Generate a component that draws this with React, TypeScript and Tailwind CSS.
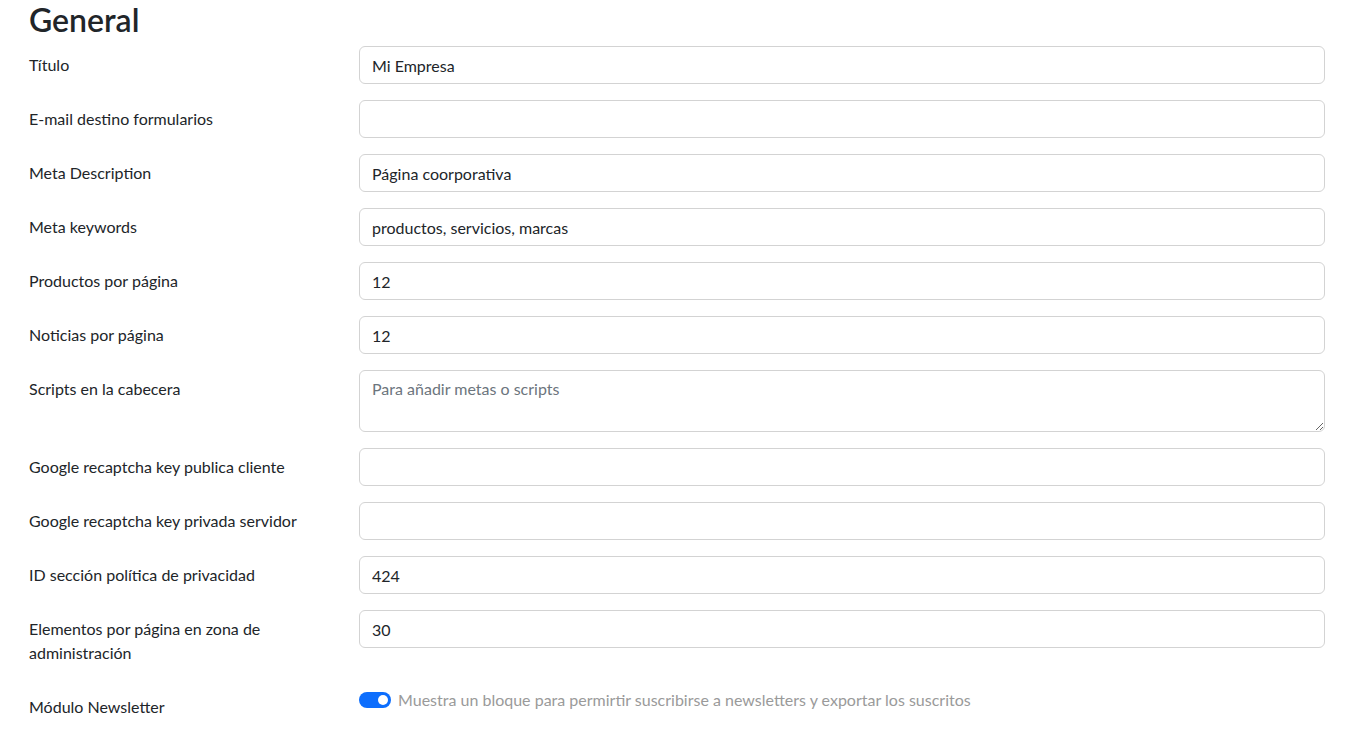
import { ReactElement } from "react";

interface Field {
  label: string;
  value?: string;
  placeholder?: string;
  textarea?: boolean;
}

const fields: Field[] = [
  { label: "Título", value: "Mi Empresa" },
  { label: "E-mail destino formularios", value: "" },
  { label: "Meta Description", value: "Página coorporativa" },
  { label: "Meta keywords", value: "productos, servicios, marcas" },
  { label: "Productos por página", value: "12" },
  { label: "Noticias por página", value: "12" },
  { label: "Scripts en la cabecera", placeholder: "Para añadir metas o scripts", textarea: true },
  { label: "Google recaptcha key publica cliente", value: "" },
  { label: "Google recaptcha key privada servidor", value: "" },
  { label: "ID sección política de privacidad", value: "424" },
  { label: "Elementos por página en zona de administración", value: "30" },
];

export default function App(): ReactElement {
  return (
    <div
      className="min-h-screen bg-white pl-[29px] pr-[30px] text-[16px] leading-6 text-[#212529]"
      style={{ fontFamily: "Lato, 'Liberation Sans', sans-serif" }}
    >
      <h2 className="pt-[1px] mb-[8px] text-[32px] font-semibold leading-[37px]">General</h2>
      <form>
        {fields.map((f) => (
          <div key={f.label} className="mb-4 flex gap-6">
            <label className="w-[306px] shrink-0 py-[7px] leading-6">{f.label}</label>
            {f.textarea ? (
              <textarea
                rows={2}
                placeholder={f.placeholder}
                className="block h-[62px] w-full rounded-[6px] border border-[#d3d3d3] px-3 py-[6px] leading-6 placeholder:text-[#6c757d] focus:outline-none"
              />
            ) : (
              <input
                type="text"
                defaultValue={f.value}
                className="block h-[38px] w-full rounded-[6px] border border-[#d3d3d3] px-3 py-[6px] leading-6 focus:outline-none"
              />
            )}
          </div>
        ))}
        <div className="flex gap-6">
          <label className="w-[306px] shrink-0 py-[7px]">Módulo Newsletter</label>
          <div className="flex h-6 items-center gap-[7px]">
            <span className="relative inline-block h-4 w-8 shrink-0 rounded-full bg-[#0d6efd]">
              <span className="absolute right-[3px] top-[3px] h-[10px] w-[10px] rounded-full bg-white" />
            </span>
            <span className="text-[#9a9a9a]">
              Muestra un bloque para permirtir suscribirse a newsletters y exportar los suscritos
            </span>
          </div>
        </div>
      </form>
    </div>
  );
}
